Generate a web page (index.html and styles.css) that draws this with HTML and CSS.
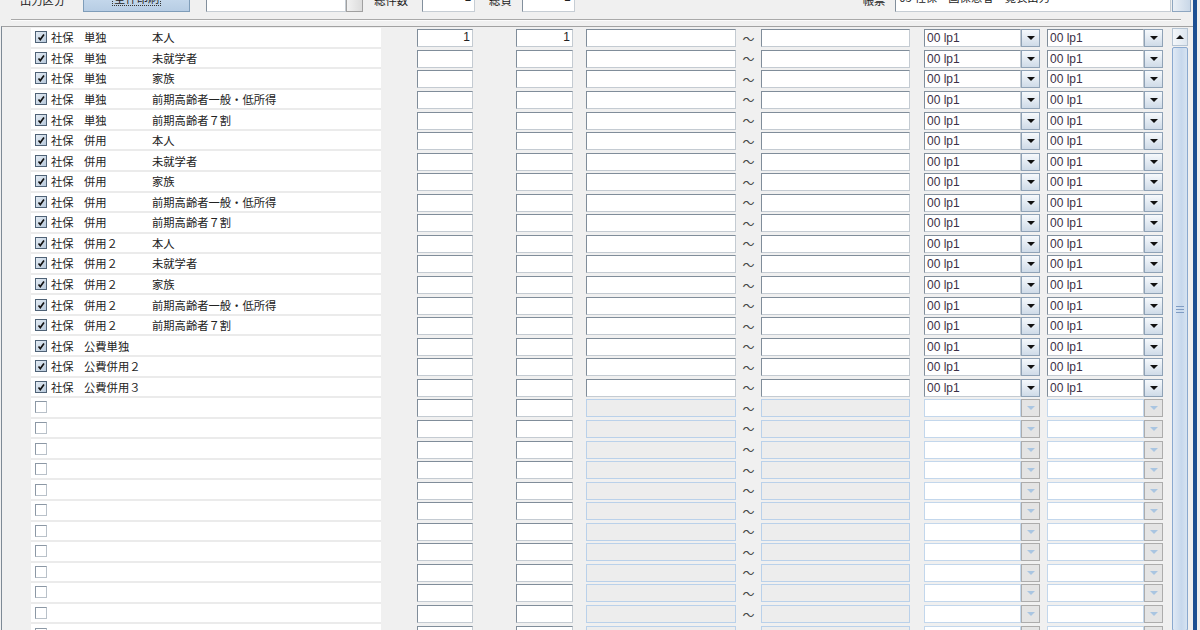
FILE: index.html
```html
<!DOCTYPE html>
<html lang="ja">

<head>
  <meta charset="UTF-8">
  <title>帳票出力設定</title>
  <link rel="stylesheet" href="styles.css">
</head>

<body>
  <div class="screen">
    <div class="app">
      <div class="topbar">
        <span class="lbl lbl-kbn">出力区分</span>
        <div class="tbtn"><span class="focus">全件印刷</span></div>
        <div class="tfield tf-name"></div>
        <div class="tsbtn"></div>
        <span class="lbl lbl-cnt">総件数</span>
        <div class="tfield tf-cnt">1</div>
        <span class="lbl lbl-sum">総負</span>
        <div class="tfield tf-sum">1</div>
        <span class="lbl lbl-form">帳票</span>
        <div class="tfield tf-form">03 社保・国保患者一覧表出力</div>
        <div class="tscroll"></div>
      </div>
      <div class="sep"></div>
      <div class="panel">
        <div class="rows" id="rows"></div>
        <div class="vscroll">
          <div class="vs-up"><i></i></div>
          <div class="vs-thumb"><span class="grip"></span></div>
        </div>
      </div>
    </div>
    <div class="edge"></div>
  </div>

  <script>
    const rows = [
      ["社保", "単独", "本人", "1", "1"],
      ["社保", "単独", "未就学者"],
      ["社保", "単独", "家族"],
      ["社保", "単独", "前期高齢者一般・低所得"],
      ["社保", "単独", "前期高齢者７割"],
      ["社保", "併用", "本人"],
      ["社保", "併用", "未就学者"],
      ["社保", "併用", "家族"],
      ["社保", "併用", "前期高齢者一般・低所得"],
      ["社保", "併用", "前期高齢者７割"],
      ["社保", "併用２", "本人"],
      ["社保", "併用２", "未就学者"],
      ["社保", "併用２", "家族"],
      ["社保", "併用２", "前期高齢者一般・低所得"],
      ["社保", "併用２", "前期高齢者７割"],
      ["社保", "公費単独", ""],
      ["社保", "公費併用２", ""],
      ["社保", "公費併用３", ""]
    ];

    const check = '<svg width="10" height="10" viewBox="0 0 10 10"><path d="M2.5 5.5 L4.3 7.6 L8 2.6" fill="none" stroke="#111" stroke-width="1.6"/></svg>';
    const arrow = '<i></i>';

    function combo(cls, on) {
      return `<div class="combo ${cls}"><span class="cval">${on ? "00 lp1" : ""}</span><span class="cbtn">${arrow}</span></div>`;
    }

    let html = "";
    for (let i = 0; i < 30; i++) {
      const r = rows[i];
      const on = !!r;
      html += `<div class="row${on ? "" : " off"}">
        <div class="label">
          <span class="chk${on ? " on" : ""}">${on ? check : ""}</span>
          <span class="kind">${on ? r[0] : ""}</span>
          <span class="sub${on && !r[2] ? " wide" : ""}">${on ? r[1] : ""}</span>
          <span class="who">${on ? r[2] : ""}</span>
        </div>
        <div class="field num n1">${on && r[3] ? r[3] : ""}</div>
        <div class="field num n2">${on && r[4] ? r[4] : ""}</div>
        <div class="field txt from"></div>
        <span class="tilde">～</span>
        <div class="field txt to"></div>
        ${combo("c1", on)}
        ${combo("c2", on)}
      </div>`;
    }
    document.getElementById("rows").innerHTML = html;
  </script>
</body>

</html>
```

FILE: styles.css
```css
html,
body {
  margin: 0;
  padding: 0;
  height: 630px;
  overflow: hidden;
}

body {
  background-color: #f0f0f0;
  font-family: "Noto Sans CJK JP", "Liberation Sans", sans-serif;
  font-size: 11.3px;
  color: #222;
}

.screen {
  display: flex;
  height: 630px;
}

.app {
  width: 1193px;
  flex: none;
}

.edge {
  width: 4px;
  background-color: #1c4f92;
}

/* top bar, mostly scrolled off */
.topbar {
  display: flex;
  align-items: flex-end;
  height: 12px;
}

.topbar > * {
  flex: none;
  box-sizing: border-box;
}

.lbl {
  line-height: 20px;
  height: 20px;
  margin-bottom: 2px;
  font-size: 11.3px;
}

.lbl-kbn {
  margin-left: 20px;
}

.tbtn {
  margin-left: 18px;
  width: 107px;
  height: 24px;
  background: linear-gradient(#cfe0f1, #b7cde4);
  border: 1px solid #7f9db9;
  text-align: center;
  padding-top: 1px;
}

.tbtn .focus {
  display: inline-block;
  border: 1px dotted #333;
  padding: 0 1px;
  line-height: 14px;
}

.tfield {
  height: 21px;
  background-color: #fff;
  border: 1px solid;
  border-color: #828f9c #c6cdd4 #c6cdd4 #828f9c;
  padding: 0 3px;
  line-height: 11px;
}

.tf-name {
  margin-left: 16px;
  width: 140px;
}

.tsbtn {
  width: 17px;
  height: 21px;
  background: linear-gradient(90deg, #f2f2f2, #dcdcdc);
  border: 1px solid #a0a0a0;
}

.lbl-cnt {
  margin-left: 11px;
}

.tf-cnt,
.tf-sum {
  width: 53px;
  text-align: right;
  font-family: "Liberation Sans", sans-serif;
  font-size: 12px;
}

.tf-cnt {
  margin-left: 14px;
}

.lbl-sum {
  margin-left: 14px;
}

.tf-sum {
  margin-left: 10px;
}

.lbl-form {
  margin-left: 288px;
}

.tf-form {
  margin-left: 10px;
  width: 276px;
}

.tscroll {
  margin-left: 1px;
  width: 19px;
  height: 22px;
  background: linear-gradient(90deg, #e9eff6, #c9d7e7);
  border: 1px solid #8ea6c0;
}

.sep {
  margin: 7px 12px 0 11px;
  height: 1px;
  background-color: #a9a9a9;
  border-bottom: 1px solid #fbfbfb;
}

/* list panel */
.panel {
  display: flex;
  margin: 5px 0 0 1px;
  border-left: 1px solid #7d8a96;
  border-top: 1px solid #a2a2a2;
  height: 604px;
}

.rows {
  flex: 1;
  padding: 1px 0 0 29px;
}

.row {
  display: flex;
  align-items: center;
  height: 20.57px;
}

.label {
  box-sizing: border-box;
  width: 350px;
  height: 100%;
  background-color: #fff;
  border-bottom: 2px solid #ebebeb;
  display: flex;
  align-items: center;
  padding-left: 4px;
  white-space: nowrap;
}

.chk {
  box-sizing: border-box;
  width: 12px;
  height: 12px;
  border: 1px solid;
  border-color: #8c98a5 #b9c1c9 #b9c1c9 #8c98a5;
  background-color: #fff;
  display: flex;
  align-items: center;
  justify-content: center;
}

.chk.on {
  border-color: #4f6276;
  background: linear-gradient(135deg, #e4ecf4, #b8c9db);
}

.kind {
  margin-left: 4px;
  width: 33px;
}

.sub {
  width: 68px;
}

.sub.wide {
  width: auto;
}

.field {
  box-sizing: border-box;
  height: 18px;
  background-color: #fff;
  border: 1px solid;
  border-color: #808d9a #c4cbd2 #c4cbd2 #808d9a;
  flex: none;
}

.num {
  text-align: right;
  padding-right: 2px;
  font-family: "Liberation Sans", sans-serif;
  font-size: 12px;
  line-height: 15px;
}

.n1 {
  margin-left: 36px;
  width: 56px;
}

.n2 {
  margin-left: 43px;
  width: 57px;
}

.from {
  margin-left: 13px;
  width: 150px;
}

.to {
  width: 149px;
}

.tilde {
  width: 25px;
  text-align: center;
  color: #444;
  font-size: 12px;
}

.combo {
  display: flex;
  height: 18px;
  flex: none;
}

.c1 {
  margin-left: 14px;
}

.c2 {
  margin-left: 7px;
}

.cval {
  box-sizing: border-box;
  width: 97px;
  height: 18px;
  background-color: #fff;
  border: 1px solid;
  border-color: #808d9a #c4cbd2 #c4cbd2 #808d9a;
  padding-left: 2px;
  font-family: "Liberation Sans", sans-serif;
  font-size: 12px;
  line-height: 16px;
  color: #3b2f45;
}

.cbtn {
  box-sizing: border-box;
  width: 19px;
  height: 18px;
  border: 1px solid #8fa2b6;
  background: linear-gradient(#f6f9fc, #cfdbe8);
  display: flex;
  align-items: center;
  justify-content: center;
}

.cbtn i,
.vs-up i {
  width: 0;
  height: 0;
  border-left: 4px solid transparent;
  border-right: 4px solid transparent;
  border-top: 4px solid #111;
}

/* disabled rows */
.off .txt {
  background-color: #ededed;
  border-color: #bad1ea;
}

.off .cval {
  border-color: #c3d7ec;
}

.off .cbtn {
  background: #e4e4e4;
  border-color: #acacac;
}

.off .cbtn i {
  border-top-color: #a9c5e1;
}

/* vertical scrollbar */
.vscroll {
  width: 16px;
  margin: 1px 5px 0 0;
  display: flex;
  flex-direction: column;
}

.vs-up {
  height: 16px;
  background: linear-gradient(90deg, #f4f7fa, #dde6ef);
  border: 1px solid #b5c4d3;
  display: flex;
  align-items: center;
  justify-content: center;
}

.vs-up i {
  border-top: none;
  border-bottom: 4px solid #111;
}

.vs-thumb {
  flex: 1;
  margin-top: 1px;
  background: linear-gradient(90deg, #dfe9f5, #c7d8ec 60%, #d6e3f1);
  border: 1px solid #8aa9cf;
  border-radius: 2px;
  display: flex;
  align-items: center;
  justify-content: center;
  padding-bottom: 60px;
}

.grip {
  width: 8px;
  height: 5px;
  border-top: 1px solid #7f9cc3;
  border-bottom: 1px solid #7f9cc3;
  position: relative;
}

.grip::after {
  content: "";
  position: absolute;
  left: 0;
  right: 0;
  top: 2px;
  border-top: 1px solid #7f9cc3;
}
```
